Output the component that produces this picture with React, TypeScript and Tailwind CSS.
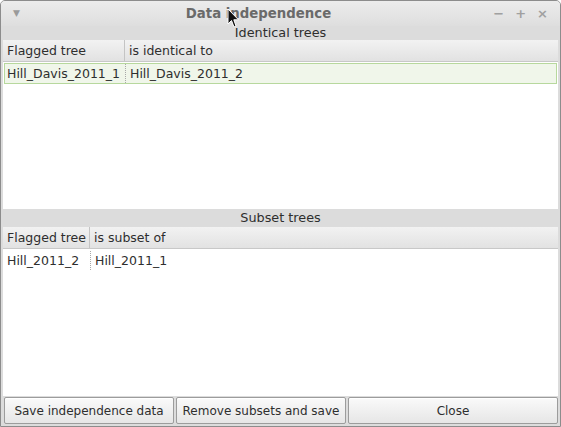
import React from "react";

const FONT = { fontFamily: '"DejaVu Sans", "Liberation Sans", sans-serif' };

function HeaderRow({ first, second, split }: { first: string; second: string; split: string }) {
  return (
    <div className="flex h-[22px] shrink-0 whitespace-nowrap border-b border-[#c8c8c8] bg-gradient-to-b from-[#f2f2f2] to-[#e2e2e2] text-[12.5px] leading-[22px] text-[#2e2e2e]">
      <div className={`${split} shrink-0 border-r border-[#c4c4c4] pl-[4px]`}>{first}</div>
      <div className="flex-1 pl-[4px]">{second}</div>
    </div>
  );
}

function DataRow({
  first,
  second,
  split,
  selected,
}: {
  first: string;
  second: string;
  split: string;
  selected?: boolean;
}) {
  return (
    <div
      className={`mx-px mt-px flex h-[21px] whitespace-nowrap border text-[12.5px] leading-[19px] text-[#2e2e2e] ${
        selected ? "border-[#b7d89d] bg-[#f0f6ea]" : "border-transparent bg-white"
      }`}
    >
      <div className={`${split} shrink-0 border-r border-dotted border-[#a8a8a8] pl-[2px]`}>{first}</div>
      <div className="flex-1 pl-[4px]">{second}</div>
    </div>
  );
}

function Btn({ label, w }: { label: string; w: string }) {
  return (
    <button
      className={`${w} h-[27px] whitespace-nowrap rounded-[2px] border border-[#9c9c9c] bg-gradient-to-b from-[#fafafa] to-[#e6e6e6] text-[12px] text-[#2e2e2e] shadow-[inset_0_1px_0_#ffffff]`}
    >
      {label}
    </button>
  );
}

export default function App() {
  return (
    <div
      style={FONT}
      className="relative flex h-[427px] w-[561px] flex-col overflow-hidden rounded-t-[5px] border border-[#8c8c8c] bg-[#dcdcdc]"
    >
      {/* title bar */}
      <div className="flex h-[25px] shrink-0 items-center bg-gradient-to-b from-[#ececec] to-[#dedede] px-[12px]">
        <span className="w-[60px] text-[9px] text-[#9a9a9a]">▼</span>
        <div className="mr-[44px] flex-1 text-center text-[13.3px] font-bold text-[#6a6a6a]">Data independence</div>
        <div className="flex w-[60px] items-center justify-end gap-[11px] text-[13px] font-bold text-[#a0a0a0]">
          <span>−</span>
          <span>+</span>
          <span>×</span>
        </div>
      </div>

      <div className="h-[14px] shrink-0 text-center text-[12.8px] leading-[14px] text-[#2e2e2e]">Identical trees</div>

      <div className="mx-[2px] flex h-[169px] shrink-0 flex-col bg-white">
        <HeaderRow first="Flagged tree" second="is identical to" split="w-[122px]" />
        <DataRow first="Hill_Davis_2011_1" second="Hill_Davis_2011_2" split="w-[121px]" selected />
      </div>

      <div className="h-[18px] shrink-0 text-center text-[12.8px] leading-[18px] text-[#2e2e2e]">Subset trees</div>

      <div className="mx-[2px] flex flex-1 flex-col bg-white">
        <HeaderRow first="Flagged tree" second="is subset of" split="w-[87px]" />
        <DataRow first="Hill_2011_2" second="Hill_2011_1" split="w-[86px]" />
      </div>

      <div className="flex h-[30px] shrink-0 gap-[2px] pl-[3px] pr-[2px] pt-px">
        <Btn label="Save independence data" w="w-[170px]" />
        <Btn label="Remove subsets and save" w="w-[170px]" />
        <Btn label="Close" w="flex-1" />
      </div>

      {/* mouse pointer */}
      <svg className="absolute left-[226px] top-[7px]" width="13" height="21" viewBox="0 0 13 21">
        <path d="M1 1 L1 16 L4.5 12.5 L7 19 L9 18 L6.8 11.8 L11.5 11.8 Z" fill="#111" stroke="#fff" strokeWidth="1" />
      </svg>
    </div>
  );
}
